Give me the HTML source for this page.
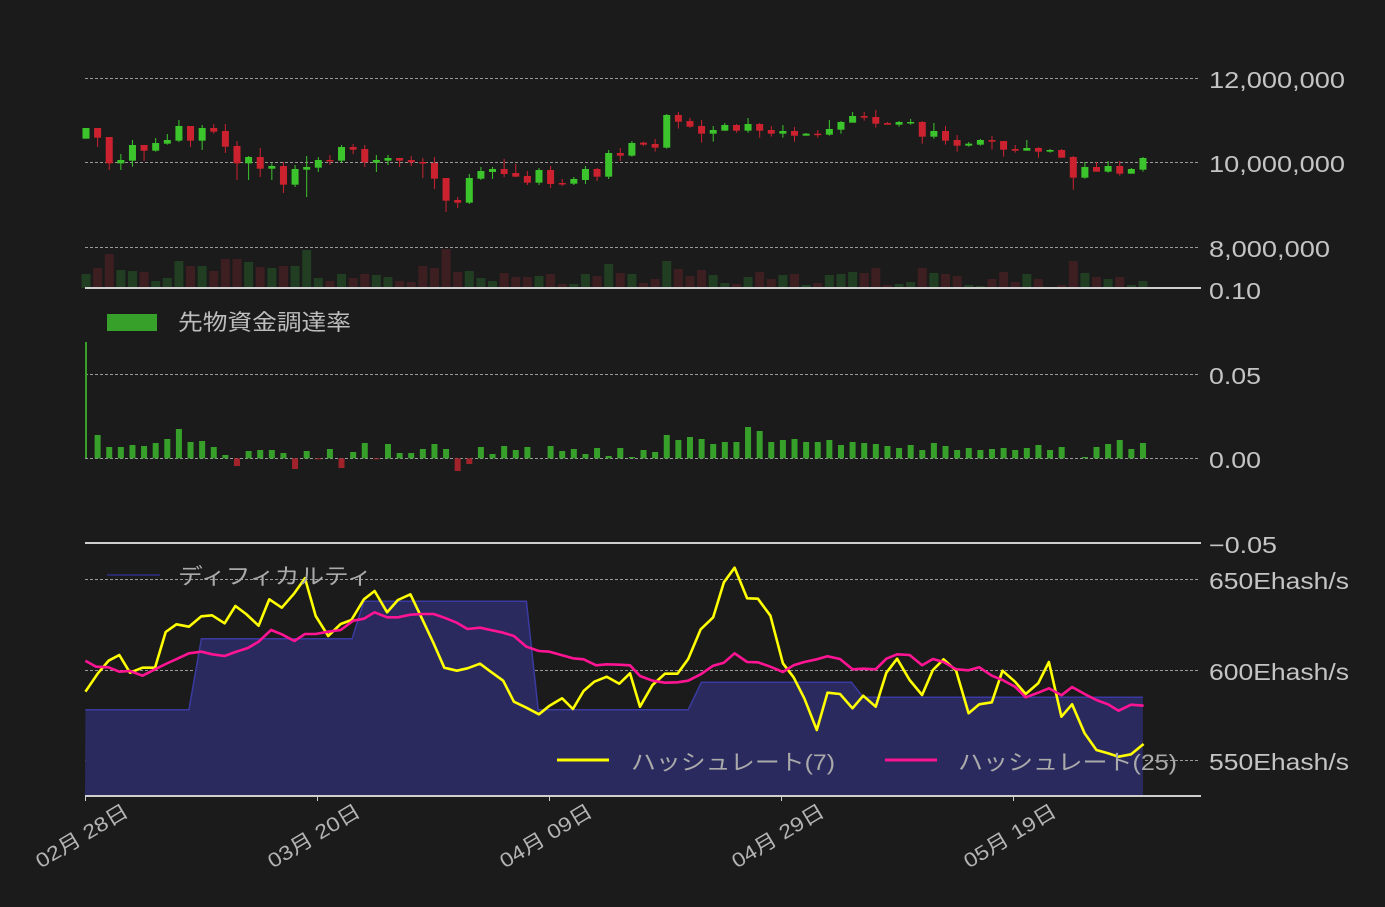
<!DOCTYPE html>
<html><head><meta charset="utf-8"><style>
html,body{margin:0;padding:0;background:#1b1b1b;}
svg{display:block;font-family:"Liberation Sans","Noto Sans CJK JP",sans-serif;}
</style></head><body>
<svg id="s" width="1385" height="907" xmlns="http://www.w3.org/2000/svg">
<rect width="1385" height="907" fill="#1b1b1b"/>
<g id="grid" stroke="#9a9a9a" stroke-width="1" stroke-dasharray="3,2">
<line x1="85" y1="78.5" x2="1200" y2="78.5"/>
<line x1="85" y1="162.5" x2="1200" y2="162.5"/>
<line x1="85" y1="247.5" x2="1200" y2="247.5"/>
<line x1="85" y1="374.5" x2="1200" y2="374.5"/>
<line x1="85" y1="458.5" x2="1200" y2="458.5"/>
<line x1="85" y1="579.5" x2="1200" y2="579.5"/>
<line x1="85" y1="670.5" x2="1200" y2="670.5"/>
<line x1="85" y1="760.5" x2="1200" y2="760.5"/>
</g>
<g id="dyn"></g>
<g fill="#c4c4c4" font-size="23" lengthAdjust="spacingAndGlyphs">
<text x="1209" y="88" textLength="136" lengthAdjust="spacingAndGlyphs">12,000,000</text>
<text x="1209" y="172" textLength="136" lengthAdjust="spacingAndGlyphs">10,000,000</text>
<text x="1209" y="257" textLength="121" lengthAdjust="spacingAndGlyphs">8,000,000</text>
<text x="1209" y="299" textLength="52" lengthAdjust="spacingAndGlyphs">0.10</text>
<text x="1209" y="384" textLength="52" lengthAdjust="spacingAndGlyphs">0.05</text>
<text x="1209" y="468" textLength="52" lengthAdjust="spacingAndGlyphs">0.00</text>
<text x="1209" y="553" textLength="68" lengthAdjust="spacingAndGlyphs">−0.05</text>
<text x="1209" y="589" textLength="140" lengthAdjust="spacingAndGlyphs">650Ehash/s</text>
<text x="1209" y="680" textLength="140" lengthAdjust="spacingAndGlyphs">600Ehash/s</text>
<text x="1209" y="770" textLength="140" lengthAdjust="spacingAndGlyphs">550Ehash/s</text>
</g>
<g stroke="#cfcfcf" stroke-width="2">
<line x1="85" y1="288" x2="1201" y2="288"/>
<line x1="85" y1="543" x2="1201" y2="543"/>
<line x1="85" y1="796" x2="1201" y2="796"/>
</g>
<g stroke="#cfcfcf" stroke-width="1">
<line x1="85.5" y1="796" x2="85.5" y2="801"/><line x1="317.5" y1="796" x2="317.5" y2="801"/><line x1="549.5" y1="796" x2="549.5" y2="801"/><line x1="781.5" y1="796" x2="781.5" y2="801"/><line x1="1013.5" y1="796" x2="1013.5" y2="801"/>
</g>
<rect x="107" y="314" width="50" height="17" fill="#37a02a"/>
<text x="178" y="330" fill="#bdbdbd" font-size="22" textLength="173" lengthAdjust="spacingAndGlyphs">先物資金調達率</text>
<line x1="107" y1="575" x2="160" y2="575" stroke="#2a2a6a" stroke-width="2"/>
<text x="178" y="584" fill="#aaaaaa" font-size="22" textLength="194" lengthAdjust="spacingAndGlyphs">ディフィカルティ</text>
<line x1="557" y1="760" x2="609" y2="760" stroke="#ffff00" stroke-width="3"/>
<text x="631" y="770" fill="#aaaaaa" font-size="22" textLength="204" lengthAdjust="spacingAndGlyphs">ハッシュレート(7)</text>
<line x1="885" y1="760" x2="937" y2="760" stroke="#ff1493" stroke-width="3"/>
<text x="958" y="770" fill="#aaaaaa" font-size="22" textLength="219" lengthAdjust="spacingAndGlyphs">ハッシュレート(25)</text>
<g fill="#b4b4b4" font-size="20" text-anchor="end">
<text transform="translate(130,815) rotate(-31)" textLength="104" lengthAdjust="spacingAndGlyphs">02月 28日</text>
<text transform="translate(362,815) rotate(-31)" textLength="104" lengthAdjust="spacingAndGlyphs">03月 20日</text>
<text transform="translate(594,815) rotate(-31)" textLength="104" lengthAdjust="spacingAndGlyphs">04月 09日</text>
<text transform="translate(826,815) rotate(-31)" textLength="104" lengthAdjust="spacingAndGlyphs">04月 29日</text>
<text transform="translate(1058,815) rotate(-31)" textLength="104" lengthAdjust="spacingAndGlyphs">05月 19日</text>
</g>
</svg>
<script>
var NS="http://www.w3.org/2000/svg",g=document.getElementById('dyn');
function el(t,a){var e=document.createElementNS(NS,t);for(var k in a)e.setAttribute(k,a[k]);g.appendChild(e);return e;}
var C=[[84,116,84,116,1],[84,113,84,141,0],[111,190,111,210,0],[180,190,162,210,1],[135,182,120,200,1],[135,152,135,183,0],[129,152,114,155,1],[120,131,102,134,1],[78,122,60,126,1],[78,122,78,141,0],[84,122,75,150,1],[84,95,72,101,0],[93,140,72,159,0],[138,190,123,240,0],[171,190,168,240,1],[171,206,144,231,0],[198,206,190,240,1],[198,254,186,279,0],[207,254,195,261,1],[201,209,168,291,1],[180,203,171,216,1],[180,182,165,195,0],[141,182,135,188,1],[141,149,132,162,0],[147,187,135,201,0],[180,188,165,216,1],[174,182,165,195,1],[174,182,174,201,0],[180,187,168,198,0],[186,190,174,234,0],[189,236,171,267,0],[234,302,234,336,0],[300,308,291,324,0],[234,308,222,312,1],[213,236,201,240,1],[207,216,201,237,1],[207,222,177,231,0],[219,230,192,231,0],[228,248,213,255,0],[210,248,204,255,1],[210,252,198,264,0],[249,251,237,258,0],[237,251,231,255,1],[207,240,198,252,1],[207,230,204,243,0],[159,230,150,237,1],[159,167,144,183,0],[129,167,123,170,1],
[128,134,125,138,0],[132,143,117,155,0],[45,143,42,146,1],[45,65,36,86,0],[63,80,54,83,0],[78,101,60,128,0],[90,101,78,125,1],[75,92,69,92,1],[75,92,72,98,0],[72,92,54,98,1],[72,92,69,113,0],[90,101,78,110,0],[93,101,75,113,1],[93,107,81,125,0],[101,107,99,107,1],[101,104,90,113,0],[87,104,60,107,1],[66,89,63,101,1],[48,68,36,68,1],[48,53,36,62,0],[51,71,30,83,0],[69,74,66,74,0],[66,74,63,80,1],[66,68,57,74,1],[66,110,63,131,0],[93,110,69,116,1],[93,122,78,134,0],[120,137,105,155,0],[131,137,126,140,1],[120,134,117,137,1],[120,125,108,149,0],[123,149,123,170,0],[147,152,135,158,0],[144,152,120,152,1],[144,155,141,173,0],[150,155,147,158,1],[150,173,147,173,0],[171,233,168,269,0],[201,233,186,236,1],[201,215,186,215,0],[198,215,183,218,1],[198,221,183,227,0],[207,221,204,221,1],[174,209,171,215,1]];
var V=[522,504,462,510,513,516,543,534,483,498,498,513,477,477,486,501,504,498,498,450,534,543,522,534,522,525,531,543,546,498,504,447,516,513,534,543,519,531,531,528,522,552,552,522,528,492,519,522,549,537,483,507,528,510,525,549,552,531,516,537,525,522,555,549,525,522,516,519,504,555,552,546,504,519,522,528,555,558,537,516,546,522,537,561,555,483,519,531,537,531,555,543];
var F=[21,300,336,336,330,333,324,312,282,321,318,336,360,-393,348,345,345,354,-402,348,-372,342,-399,351,324,-372,327,354,354,342,327,342,-408,-387,336,357,333,345,336,0,333,348,342,357,339,363,339,366,
345,351,300,315,306,312,327,321,321,276,288,321,315,312,321,321,315,330,321,324,327,333,339,330,345,324,333,345,339,345,342,339,345,339,330,345,336,0,366,336,327,315,342,324];
var X=function(i){return 86+i*11.615;};
for(var i=0;i<92;i++){var x=X(i),t=100+V[i]/3;el('rect',{x:x-4.5,y:t,width:9,height:288-t,fill:C[i][4]?'#213d22':'#3d1e21'});}
for(var i=0;i<92;i++){var c=C[i],x=X(i),col=c[4]?'#3cc42c':'#cc2230';
el('line',{x1:x,x2:x,y1:100+c[2]/3,y2:100+c[3]/3,stroke:col,'stroke-width':1});
var t=100+c[0]/3,b=100+c[1]/3;el('rect',{x:x-3.5,y:t,width:7,height:Math.max(1.5,b-t),fill:col});}
for(var i=0;i<92;i++){var f=F[i],x=X(i);if(f===0)continue;
if(i===0){el('rect',{x:85,y:335+f/3,width:2,height:458-335-f/3,fill:'#37a02a'});continue;}
if(f>0){var t=335+f/3;el('rect',{x:x-3,y:t,width:6,height:458.3-t,fill:'#37a02a'});}
else{var b=335+(-f)/3;el('rect',{x:x-3,y:458.3,width:6,height:Math.max(1,b-458.3),fill:'#a0222a'});}}
function pz(arr,ox){return arr.map(function(p){return [ox+p[0]/2.8,540+p[1]/3];});}
var D=pz([[15,509],[305,509],[340,296],[762,296],[795,184],[1250,184],[1283,509],[1568,509]],80).concat(pz([[135,509],[172,427],[592,427],[625,472],[1408,472]],640));
var d='M85,796 '+D.map(function(p){return 'L'+p[0].toFixed(1)+','+p[1].toFixed(1);}).join(' ')+' L1143,796 Z';
el('path',{d:d,fill:'#2a2a5f'});
el('path',{d:'M'+D.map(function(p){return p[0].toFixed(1)+','+p[1].toFixed(1);}).join(' L'),fill:'none',stroke:'#3a3aa0','stroke-width':1.5});
var Y=pz([[15,455],[50,400],[80,362],[110,345],[140,398],[175,383],[210,383],[240,276],[270,253],[305,260],[340,229],[370,226],[405,250],[435,198],[465,222],[500,257],[530,178],[565,203],[600,160],[630,115],[660,228],[695,288],[730,252],[760,240],[795,178],[825,153],[860,217],[890,180],[925,163],[955,230],[990,310],[1020,383],[1055,392],[1085,385],[1120,371],[1150,395],[1185,422],[1215,485],[1250,503],[1285,523],[1315,497],[1350,475],[1380,507],[1410,453],[1440,425],[1475,410],[1510,431],[1540,400]],80).concat(pz([[0,500],[35,435],[70,401],[105,401],[135,357],[170,268],[205,232],[235,127],[265,83],[300,175],[330,176],[365,227],[400,370],[430,412],[460,475],[495,570],[525,458],[560,462],[595,505],[625,467],[660,500],[690,398],[720,356],[755,420],[790,465],[820,390],[850,358],[885,392],[920,520],[950,493],[985,487],[1015,392],[1050,425],[1080,462],[1115,430],[1145,366],[1180,530],[1210,493],[1245,580],[1278,630],[1310,640],[1340,650],[1375,643],[1410,612]],640));
var M=pz([[15,362],[45,380],[80,382],[110,395],[140,393],[175,407],[210,388],[240,372],[275,355],[305,340],[340,335],[370,343],[405,348],[435,336],[470,324],[500,305],[535,270],[565,283],[600,303],[630,282],[660,282],[695,275],[730,270],[765,242],[795,236],[825,217],[860,232],[890,232],[925,224],[960,222],[990,222],[1020,233],[1055,248],[1085,267],[1120,263],[1150,270],[1185,278],[1215,288],[1250,320],[1285,333],[1315,335],[1350,346],[1380,355],[1410,358],[1445,376],[1475,373],[1510,374],[1540,376]],80).concat(pz([[0,408],[35,422],[70,428],[105,427],[135,422],[170,403],[205,377],[235,368],[265,340],[300,366],[330,367],[365,380],[400,396],[430,376],[460,366],[495,358],[525,349],[560,357],[595,388],[625,386],[660,388],[690,356],[720,343],[755,345],[790,376],[820,357],[850,366],[885,388],[920,391],[950,382],[985,407],[1015,420],[1050,440],[1080,472],[1115,458],[1145,445],[1180,466],[1210,441],[1245,462],[1278,480],[1310,493],[1340,512],[1375,494],[1410,497]],640));
function pl(P,col){el('path',{d:'M'+P.map(function(p){return p[0].toFixed(1)+','+p[1].toFixed(1);}).join(' L'),fill:'none',stroke:col,'stroke-width':2.6,'stroke-linejoin':'round'});}
pl(Y,'#ffff00');pl(M,'#ff1493');
</script>
</body></html>
